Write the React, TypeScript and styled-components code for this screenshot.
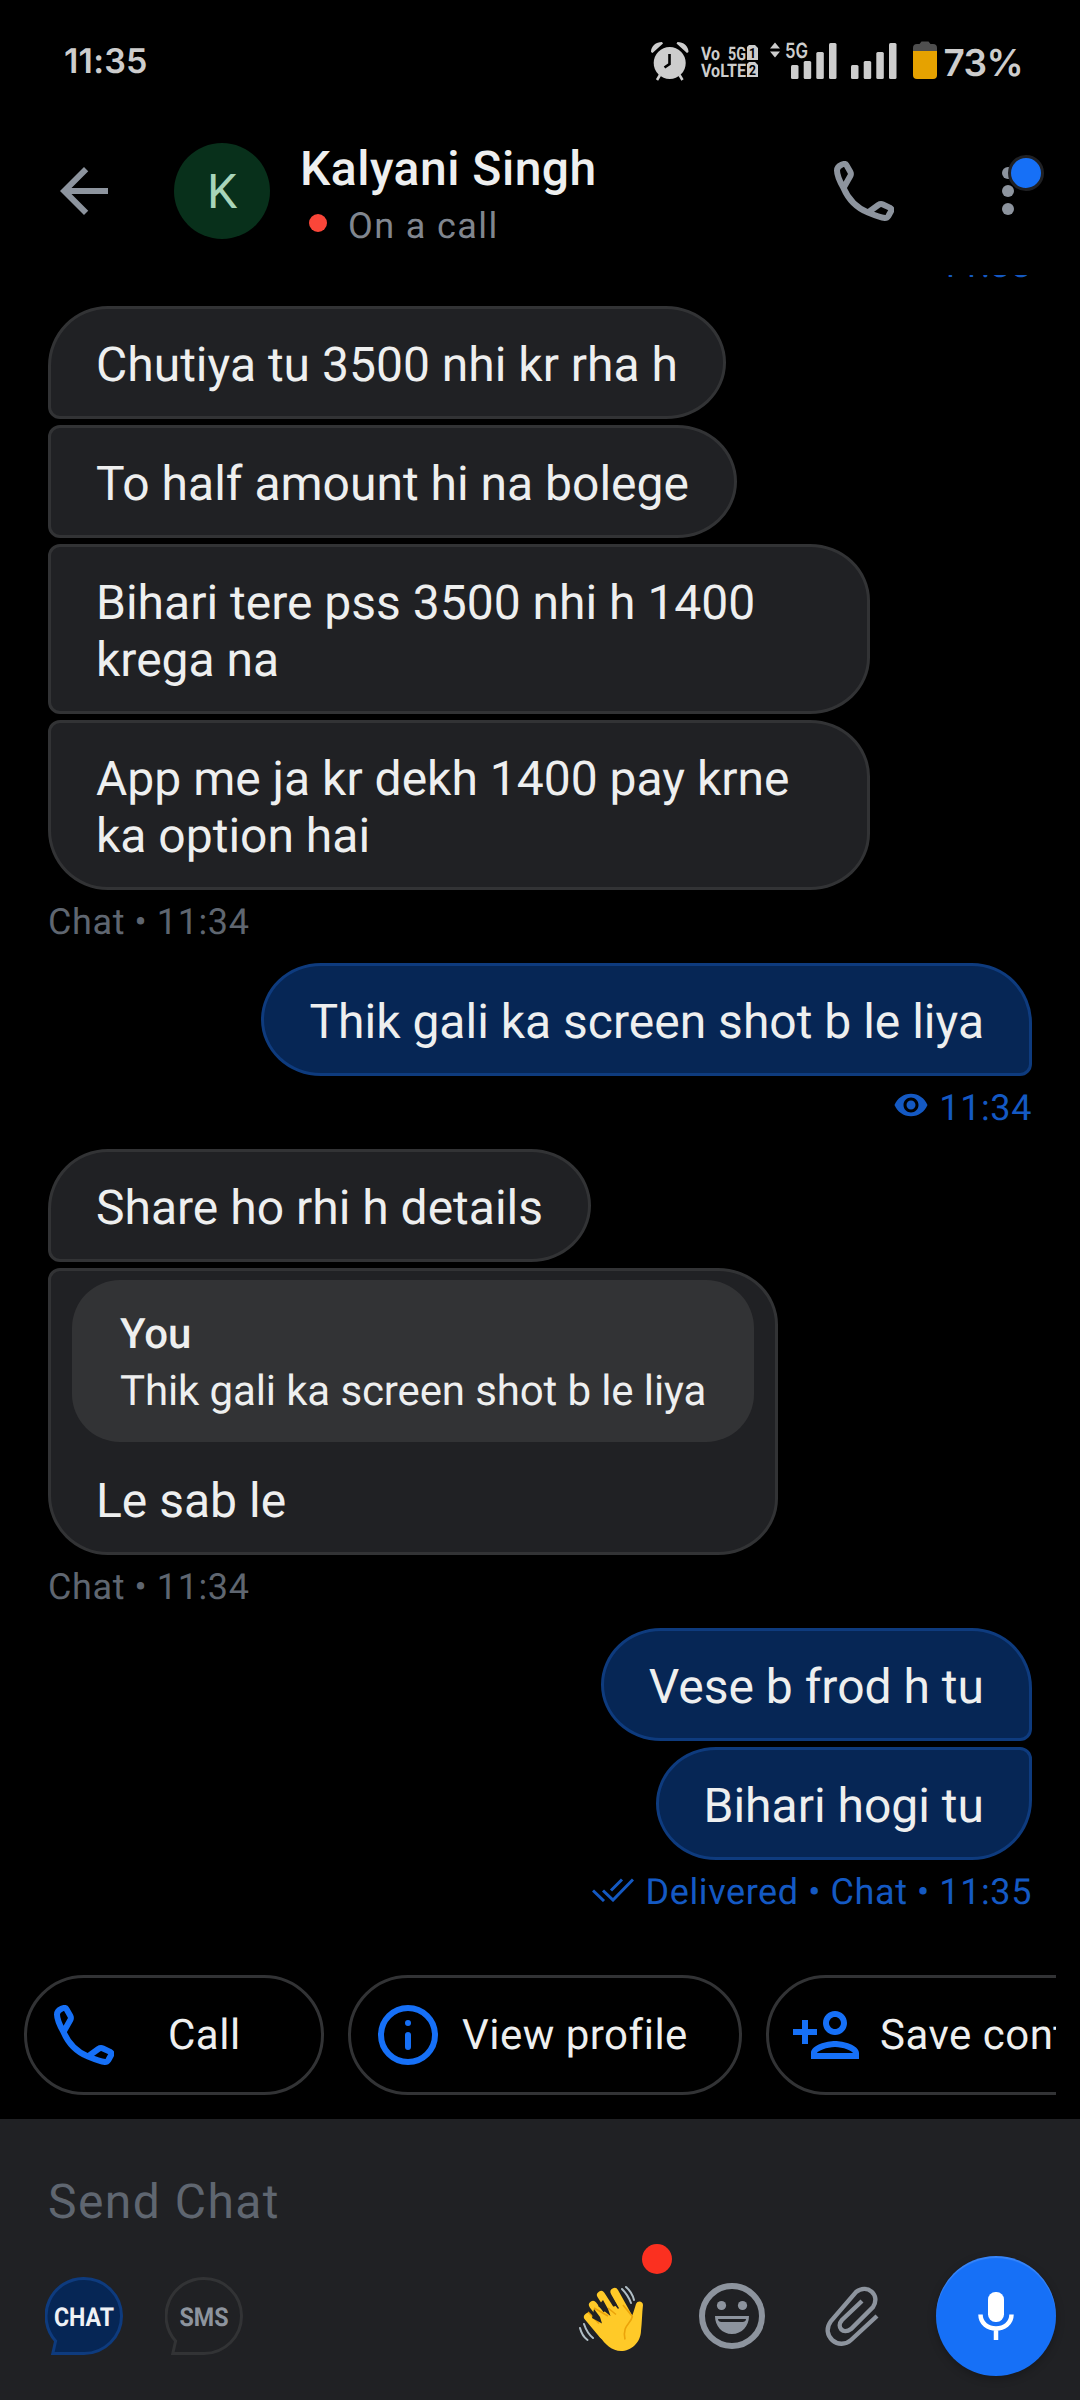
import React from "react";
import styled, { createGlobalStyle, css } from "styled-components";

const GlobalStyle = createGlobalStyle`
  html, body { margin: 0; background: #000; }
  * { box-sizing: border-box; }
`;

const colors = {
  surface: "#202124",
  outline: "#323335",
  text: "#eeefef",
  muted: "#5f6670",
  icon: "#8d949e",
  accent: "#1670f7",
  link: "#1459c3",
  sent: "#062655",
  sentOutline: "#0e3b7e",
};

const Screen = styled.div`
  width: 1080px;
  height: 2400px;
  display: flex;
  flex-direction: column;
  background: #000;
  color: ${colors.text};
  font-family: Roboto, "Noto Sans", sans-serif;
  text-rendering: geometricPrecision;
  overflow: hidden;
`;

/* Status bar */
const StatusBar = styled.div`
  height: 108px;
  display: flex;
  align-items: flex-start;
  justify-content: space-between;
  padding: 40px 57px 0 64px;
  color: #cdcdcd;
  font-family: Inter, Roboto, sans-serif;
`;
const Clock = styled.span`
  font-size: 34px;
  line-height: 44px;
  font-weight: 600;
  letter-spacing: 0.2px;
`;
const StatusIcons = styled.div`
  display: flex;
  align-items: flex-start;
`;
const Battery = styled.span`
  font-size: 37px;
  line-height: 46px;
  font-weight: 600;
  margin-left: 4px;
  letter-spacing: -0.6px;
`;

/* App bar */
const AppBar = styled.header`
  height: 167px;
  display: flex;
  align-items: center;
  padding: 0 36px 1px 48px;
`;
const IconButton = styled.button<{ $gap?: number }>`
  width: 72px;
  height: 72px;
  margin-left: ${(p) => p.$gap ?? 0}px;
  padding: 0;
  border: 0;
  background: none;
  display: flex;
  align-items: center;
  justify-content: center;
  position: relative;
  flex: none;
`;
const Avatar = styled.div`
  width: 96px;
  height: 96px;
  margin-left: 54px;
  border-radius: 50%;
  background: #08301b;
  color: #a8d5ba;
  font-size: 48px;
  display: flex;
  align-items: center;
  justify-content: center;
  flex: none;
`;
const Contact = styled.div`
  flex: 1;
  margin-left: 30px;
  padding-top: 7px;
`;
const Name = styled.div`
  font-size: 48px;
  line-height: 60px;
  font-weight: 500;
  letter-spacing: 0.5px;
`;
const Presence = styled.div`
  display: flex;
  align-items: center;
  margin-top: 3px;
  font-size: 36px;
  line-height: 48px;
  letter-spacing: 1.4px;
  color: #80868f;
`;
const PresenceDot = styled.span`
  width: 18px;
  height: 18px;
  margin: 0 21px 6px 9px;
  border-radius: 50%;
  background: #fa4639;
`;
const Badge = styled.span`
  position: absolute;
  top: 0;
  right: 0;
  width: 36px;
  height: 36px;
  border-radius: 50%;
  border: 3px solid ${colors.surface};
  background: ${colors.accent};
`;

/* Conversation */
const Conversation = styled.main`
  height: 1658px;
  padding: 0 48px;
  display: flex;
  flex-direction: column;
  justify-content: flex-end;
  overflow: hidden;
  flex: none;
`;
const Group = styled.section<{ $mine?: boolean }>`
  display: flex;
  flex-direction: column;
  align-items: ${(p) => (p.$mine ? "flex-end" : "flex-start")};
  gap: 6px;
  flex: none;
`;
const Meta = styled.div<{ $mine?: boolean }>`
  height: 65px;
  margin: -6px 0 8px;
  display: flex;
  align-items: center;
  font-size: 36px;
  line-height: 65px;
  letter-spacing: 0.6px;
  white-space: nowrap;
  color: ${(p) => (p.$mine ? colors.link : colors.muted)};
`;
const Receipt = styled.span<{ $gap: number; $lift: number }>`
  display: flex;
  margin: 0 ${(p) => p.$gap}px ${(p) => p.$lift}px 0;
`;
type Place = "first" | "last" | "single";
const radii = (mine: boolean, place: Place) => {
  const top = place === "last" ? 12 : 60;
  const bottom = place === "last" ? 60 : 12;
  return mine
    ? css`border-radius: 60px ${top}px ${bottom}px 60px / 56.5px ${top}px ${bottom}px 56.5px;`
    : css`border-radius: ${top}px 60px 60px ${bottom}px / ${top}px 56.5px 56.5px ${bottom}px;`;
};
const Bubble = styled.div<{ $mine?: boolean; $place: Place; $middle?: boolean; $quote?: boolean }>`
  max-width: 822px;
  padding: ${(p) => (p.$quote ? "9px 21px 23px" : "27px 45px 23px")};
  border: 3px solid ${(p) => (p.$mine ? colors.sentOutline : colors.outline)};
  background: ${(p) => (p.$mine ? colors.sent : colors.surface)};
  font-size: 48px;
  line-height: 57px;
  ${(p) => radii(!!p.$mine, p.$place)}
  ${(p) => p.$middle && css`border-top-left-radius: 12px;`}
`;
const Quote = styled.blockquote`
  margin: 0 0 30px;
  height: 162px;
  padding: 26px 48px 0;
  border-radius: 48px;
  background: #323335;
  font-size: 42px;
  line-height: 57px;
  letter-spacing: -0.12px;
`;
const QuoteAuthor = styled.div`
  font-weight: 500;
`;
const QuoteReply = styled.div`
  padding: 0 24px;
`;

/* Quick actions */
const Actions = styled.div`
  height: 144px;
  margin: 42px 24px 0;
  display: flex;
  gap: 24px;
  overflow: hidden;
  flex: none;
`;
const Chip = styled.button<{ $width: number; $inset?: number }>`
  width: ${(p) => p.$width}px;
  height: 120px;
  padding: 0 0 0 ${(p) => p.$inset ?? 27}px;
  flex: none;
  display: flex;
  align-items: center;
  border: 3px solid ${colors.outline};
  border-radius: 60px;
  background: none;
  color: ${colors.text};
  font-family: inherit;
  font-size: 42px;
  letter-spacing: 0.5px;
  white-space: nowrap;
  text-rendering: inherit;
`;
const ChipLabel = styled.span<{ $gap: number }>`
  margin-left: ${(p) => p.$gap}px;
`;

/* Composer */
const Composer = styled.footer`
  flex: 1;
  background: ${colors.surface};
  padding: 54px 24px 0 45px;
`;
const Placeholder = styled.div`
  padding-left: 3px;
  font-size: 48px;
  line-height: 58px;
  letter-spacing: 1.45px;
  color: ${colors.muted};
`;
const Tools = styled.div`
  display: flex;
  align-items: center;
  height: 120px;
  margin-top: 25px;
`;
const Mode = styled.svg`
  width: 78px;
  height: 78px;
  margin-right: 42px;
  flex: none;
`;
const Spacer = styled.div`
  flex: 1;
`;
const Alert = styled.span`
  position: absolute;
  top: -36px;
  left: 66px;
  width: 30px;
  height: 30px;
  border-radius: 50%;
  background: #fb3020;
`;
const MicButton = styled.button`
  width: 120px;
  height: 120px;
  margin-left: 48px;
  padding: 0;
  border: 0;
  border-radius: 50%;
  display: flex;
  align-items: center;
  justify-content: center;
  background: ${colors.accent};
  box-shadow: 0 3px 8px rgba(0, 0, 0, 0.25), inset 0 2px 1px rgba(255, 255, 255, 0.15);
`;

const PhoneIcon = ({ color }: { color: string }) => (
  <svg width="60" height="60" viewBox="0 0 60 60" fill="none" stroke={color} strokeWidth="6" strokeLinejoin="round">
    <path d="M9.5 27C5.5 20 3 15 3 9.5C3 7 4.2 5.3 7 4C9 3 11.2 2 12.4 4L16.4 11C17.3 12.8 17 14 16 15.6L9.5 27C14 37.5 23 47 34 51.5C40 54 46 56.5 51 57C53 57 53.7 56 54.5 54.8L57 50.3C58 48.5 57.3 47.5 55.7 46.6L49 43.5C47.5 42.8 45.8 43 44.3 44L34 51.5" />
  </svg>
);

const Indicators = () => (
  <svg width="290" height="42" viewBox="650 41 290 42" fill="#cdcdcd">
    <circle cx="670.7" cy="64" r="16" />
    <path d="M652 53c0-6 5-10 11-10l1 1.500-10.500 9.500zM689.500 53c0-6-5-10-11-10l-1 1.500 10.500 9.500z" />
    <path d="M661 76l-3 5M680.500 76l3 5" stroke="#cdcdcd" strokeWidth="2.600" />
    <path d="M670.500 55v10l-5 3.500" fill="none" stroke="#000" strokeWidth="2.600" />
    <g fontFamily="Roboto, sans-serif" fontWeight="700" fontSize="18.500">
      <text x="702" y="60.500" textLength="19" lengthAdjust="spacingAndGlyphs">Vo</text>
      <text x="729" y="60.500" textLength="18" lengthAdjust="spacingAndGlyphs">5G</text>
      <text x="702" y="77.500" textLength="45" lengthAdjust="spacingAndGlyphs">VoLTE</text>
      <path d="M750 46h6l3 3v12h-11v-13zM750 63h6l3 3v12h-11v-13z" />
      <text x="750" y="58.500" fontSize="14" fill="#000" textLength="7" lengthAdjust="spacingAndGlyphs">1</text>
      <text x="750" y="75.500" fontSize="14" fill="#000" textLength="7" lengthAdjust="spacingAndGlyphs">2</text>
    </g>
    <path d="M771 49.500l5-6 5 6zM771 52.500l5 6 5-6z" />
    <text x="786" y="58.500" fontFamily="Inter, sans-serif" fontWeight="600" fontSize="21" textLength="23" lengthAdjust="spacingAndGlyphs">5G</text>
    {[792, 852].map((x) => (
      <g key={x}>
        <rect x={x} y="66" width="7.500" height="14" rx="1.500" />
        <rect x={x + 12.7} y="62" width="7.500" height="18" rx="1.500" />
        <rect x={x + 25.3} y="53" width="7.500" height="27" rx="1.500" />
        <rect x={x + 38} y="44" width="7.500" height="36" rx="1.500" />
      </g>
    ))}
    <path d="M914 53v-4q0-4 4-4h2.500l2-2.500h7l2 2.500h2.500q4 0 4 4v4z" fill="#4f4f4f" />
    <path d="M914 52h24v24q0 4-4 4h-16q-4 0-4-4z" fill="#e6a200" />
  </svg>
);

const modePath = "M39 1.5A37.500 37.500 0 0 1 39 76.500H7.800L10.600 64A37.500 37.500 0 0 1 39 1.500Z";
const ModeBadge = ({ label, active }: { label: string; active?: boolean }) => (
  <Mode viewBox="0 0 78 78">
    <path d={modePath} fill={active ? "#062655" : "none"} stroke={active ? colors.sentOutline : colors.outline} strokeWidth="3" />
    <text
      x="39" y="49" textAnchor="middle" fontFamily="Roboto, sans-serif" fontWeight="700" fontSize="26"
      textLength={active ? 60 : 49} lengthAdjust="spacingAndGlyphs" fill={active ? "#eef1f5" : colors.icon}
    >
      {label}
    </text>
  </Mode>
);

const WaveIcon = () => (
  <svg width="72" height="72" viewBox="0 -2 72 72">
    <g stroke="#ffca28" strokeWidth="8" strokeLinecap="round" fill="none">
      <path d="M12 35L27 53M17 23L33 44M25 13L41 38M38.500 10L53 36" />
    </g>
    <path d="M14 39L24 33L33 26L46 22L56 34C58 29 59 25 60 22C61.500 18 67 19 67 23C66 31 66 40 65 49C64.500 61 55 69 45 69C36 69 29 62 24 55Z" fill="#ffca28" />
    <path d="M56.500 34C55 42 46 43 49 57.500M12 30L23 41.500M18 26L32 34M32 26L40 32.500M47 23L56 34" stroke="#eba30a" strokeWidth="1.600" fill="none" />
    <path d="M16 36L26 41.500L24 35L18 27M22 24L34.500 34L32 27L27 18M34 17L42 27L43 26L36 15" fill="#202124" />
    <path d="M46 7q6 6 9 14M50 5q6 5 8 13M8 42q3 9 9 14M4 46q2 8 7.500 12" stroke="#b0bec5" strokeWidth="2" fill="none" strokeLinecap="round" />
  </svg>
);

export default function App() {
  return (
    <>
      <GlobalStyle />
      <Screen>
        <StatusBar>
          <Clock>11:35</Clock>
          <StatusIcons>
            <Indicators />
            <Battery>73%</Battery>
          </StatusIcons>
        </StatusBar>

        <AppBar>
          <IconButton>
            <svg width="72" height="72" viewBox="0 0 24 24" fill={colors.icon}>
              <path d="M20 11H7.830l5.590-5.590L12 4l-8 8 8 8 1.410-1.410L7.830 13H20v-2z" />
            </svg>
          </IconButton>
          <Avatar>K</Avatar>
          <Contact>
            <Name>Kalyani Singh</Name>
            <Presence>
              <PresenceDot />
              On a call
            </Presence>
          </Contact>
          <IconButton>
            <PhoneIcon color={colors.icon} />
          </IconButton>
          <IconButton $gap={72}>
            <svg width="12" height="48" viewBox="0 0 12 48" fill={colors.icon}>
              <circle cx="6" cy="6" r="6" />
              <circle cx="6" cy="24" r="6" />
              <circle cx="6" cy="42" r="6" />
            </svg>
            <Badge />
          </IconButton>
        </AppBar>

        <Conversation>
          <Group $mine>
            <Meta $mine>11:33</Meta>
          </Group>
          <Group>
            <Bubble $place="first">Chutiya tu 3500 nhi kr rha h</Bubble>
            <Bubble $place="first" $middle>To half amount hi na bolege</Bubble>
            <Bubble $place="first" $middle>Bihari tere pss 3500 nhi h 1400 krega na</Bubble>
            <Bubble $place="last">App me ja kr dekh 1400 pay krne ka option hai</Bubble>
            <Meta>Chat • 11:34</Meta>
          </Group>
          <Group $mine>
            <Bubble $mine $place="single">Thik gali ka screen shot b le liya</Bubble>
            <Meta $mine>
              <Receipt $gap={10} $lift={7}>
                <svg width="36" height="36" viewBox="0 0 24 24" fill={colors.link}>
                  <path d="M12 4.500C7 4.500 2.730 7.610 1 12c1.730 4.390 6 7.500 11 7.500s9.270-3.110 11-7.500c-1.730-4.390-6-7.500-11-7.500zM12 17c-2.760 0-5-2.240-5-5s2.240-5 5-5 5 2.240 5 5-2.240 5-5 5zm0-8c-1.660 0-3 1.340-3 3s1.340 3 3 3 3-1.340 3-3-1.340-3-3-3z" />
                </svg>
              </Receipt>
              11:34
            </Meta>
          </Group>
          <Group>
            <Bubble $place="first">Share ho rhi h details</Bubble>
            <Bubble $place="last" $quote>
              <Quote>
                <QuoteAuthor>You</QuoteAuthor>
                Thik gali ka screen shot b le liya
              </Quote>
              <QuoteReply>Le sab le</QuoteReply>
            </Bubble>
            <Meta>Chat • 11:34</Meta>
          </Group>
          <Group $mine>
            <Bubble $mine $place="first">Vese b frod h tu</Bubble>
            <Bubble $mine $place="last">Bihari hogi tu</Bubble>
            <Meta $mine>
              <Receipt $gap={12} $lift={5}>
                <svg width="42" height="24" viewBox="0 0 42 24" fill="none" stroke={colors.link} strokeWidth="3">
                  <path d="M1 12.500L12 23M30 1.500L19 12.500M11 12.500L21 22L41 1.500" />
                </svg>
              </Receipt>
              Delivered • Chat • 11:35
            </Meta>
          </Group>
        </Conversation>

        <Actions>
          <Chip $width={300}>
            <PhoneIcon color={colors.accent} />
            <ChipLabel $gap={54}>Call</ChipLabel>
          </Chip>
          <Chip $width={394}>
            <svg width="60" height="60" viewBox="0 0 60 60" fill="none" stroke={colors.accent} strokeWidth="6">
              <circle cx="30" cy="30" r="27" />
              <path d="M30 30v12" strokeLinecap="round" />
              <circle cx="30" cy="18" r="3" fill={colors.accent} stroke="none" />
            </svg>
            <ChipLabel $gap={24}>View profile</ChipLabel>
          </Chip>
          <Chip $width={400} $inset={21}>
            <svg width="72" height="72" viewBox="0 0 24 24" fill={colors.accent}>
              <path d="M15 12c2.210 0 4-1.790 4-4s-1.790-4-4-4-4 1.790-4 4 1.790 4 4 4zm0-6c1.100 0 2 .9 2 2s-.9 2-2 2-2-.9-2-2 .9-2 2-2zm0 8c-2.670 0-8 1.340-8 4v2h16v-2c0-2.660-5.330-4-8-4zm-6 4c.22-.72 3.310-2 6-2 2.700 0 5.800 1.290 6 2H9zm-3-3v-3h3v-2H6V7H4v3H1v2h3v3z" />
            </svg>
            <ChipLabel $gap={18}>Save contact</ChipLabel>
          </Chip>
        </Actions>

        <Composer>
          <Placeholder>Send Chat</Placeholder>
          <Tools>
            <ModeBadge label="CHAT" active />
            <ModeBadge label="SMS" />
            <Spacer />
            <IconButton>
              <WaveIcon />
              <Alert />
            </IconButton>
            <IconButton $gap={48}>
              <svg width="66" height="66" viewBox="0 0 66 66" fill={colors.icon}>
                <circle cx="33" cy="33" r="30" fill="none" stroke={colors.icon} strokeWidth="6" />
                <circle cx="22.500" cy="22.500" r="4.600" />
                <circle cx="43.500" cy="22.500" r="4.600" />
                <path fillRule="evenodd" d="M16 33h34c0 10-7 18-17 18s-17-8-17-18zM19 36c0 2 1.500 3 3.500 3h21c2 0 3.500-1 3.500-3z" />
              </svg>
            </IconButton>
            <IconButton $gap={48}>
              <svg width="54" height="60" viewBox="0 0 54 60" fill="none" stroke={colors.icon} strokeWidth="4.400">
                <path d="M52 30L26 54C14 65-5 50 6 35L31 6C42-3 56 9 48 21L26 43C18 49 11 41 17 34L37 15" />
              </svg>
            </IconButton>
            <MicButton>
              <svg width="36" height="48" viewBox="0 0 36 48" fill="#fff">
                <rect x="10" y="0" width="16" height="30" rx="7.500" />
                <path d="M2.500 22.500C2.500 41 33.500 41 33.500 22.500M18 36v12" fill="none" stroke="#fff" strokeWidth="4.500" />
              </svg>
            </MicButton>
          </Tools>
        </Composer>
      </Screen>
    </>
  );
}
